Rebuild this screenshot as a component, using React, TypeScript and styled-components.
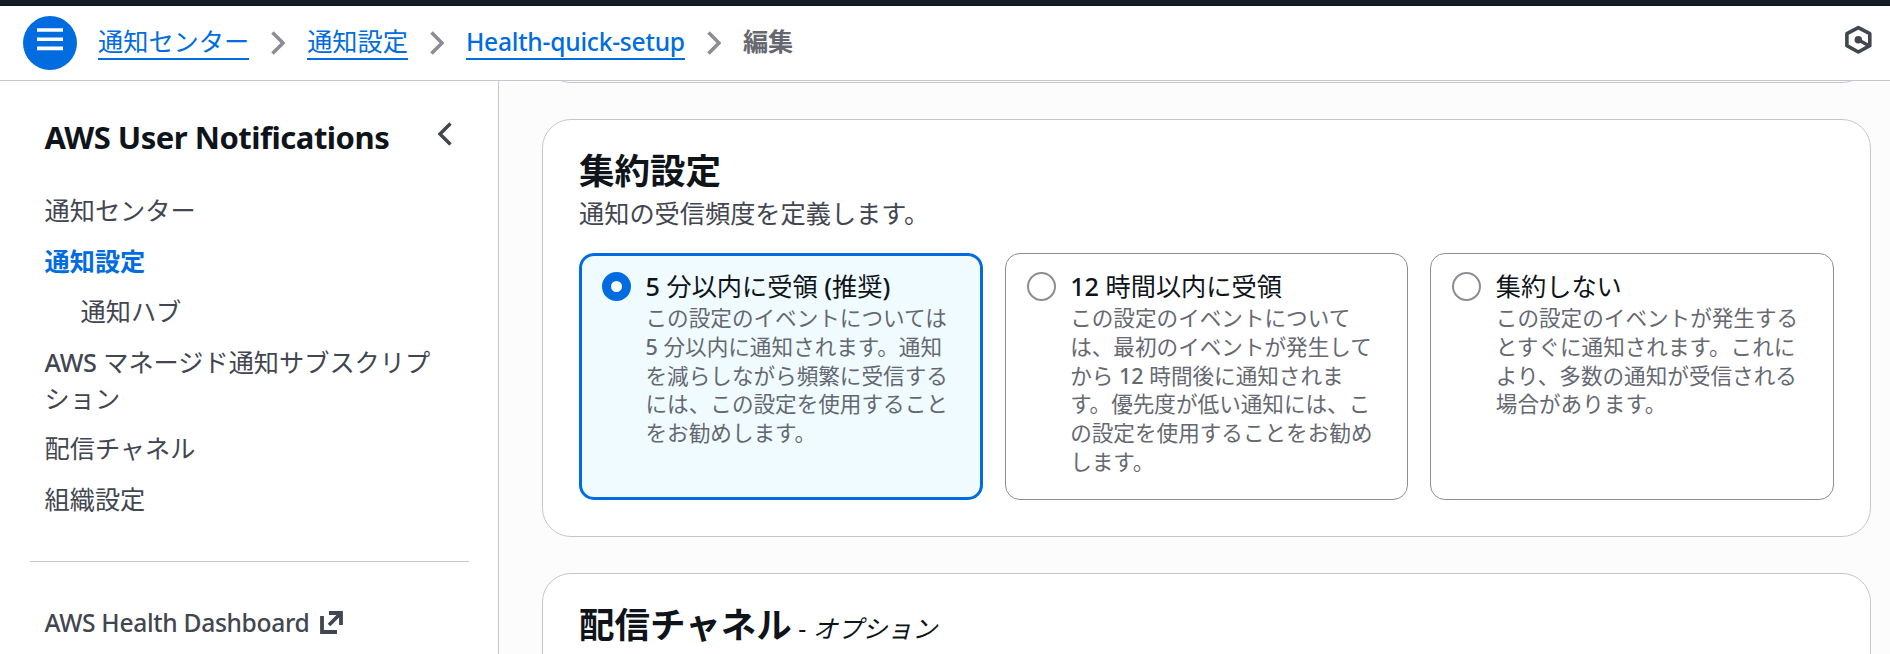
import React from "react";
import styled, { createGlobalStyle, css } from "styled-components";

const GlobalStyle = createGlobalStyle`
  *, *::before, *::after { box-sizing: border-box; }
  html, body { margin: 0; padding: 0; height: 100%; overflow: hidden; }
  body {
    font-family: "Noto Sans", "Noto Sans CJK JP", sans-serif;
    font-size: 25.2px;
    line-height: 36px;
    color: #0f141a;
    background: #fff;
  }
`;

const Page = styled.div`
  height: 654px;
  display: flex;
  flex-direction: column;
`;

const TopStrip = styled.div`
  flex: none;
  height: 6px;
  background: #161d26;
  border-bottom: 1px solid #14111f;
`;

const Header = styled.header`
  flex: none;
  height: 75px;
  display: flex;
  align-items: center;
  padding: 0 18px 0 23px;
  background: #fff;
  border-bottom: 1px solid #c6c6cd;
`;

const MenuButton = styled.button`
  flex: none;
  width: 54px;
  height: 54px;
  margin: 0 21px 0 0;
  padding: 12px 0 0;
  border: 0;
  border-radius: 50%;
  background: #006ce0;
  display: flex;
  justify-content: center;
  align-items: flex-start;
`;

const Breadcrumbs = styled.nav`
  flex: 1;
  display: flex;
  align-items: center;
  white-space: nowrap;
`;

const Crumb = styled.a`
  height: 34px;
  line-height: 30px;
  color: #006ce0;
  border-bottom: 2px solid #006ce0;
`;

const Current = styled.span`
  height: 34px;
  line-height: 30px;
  color: #656871;
  font-weight: 700;
`;

const Separator = styled.svg`
  flex: none;
  width: 14px;
  height: 24px;
  margin: 0 22px;
`;

const AssistantIcon = styled.svg`
  flex: none;
  width: 28px;
  height: 30px;
  margin-bottom: 7px;
`;

const Latin = styled.span<{ $size?: number; $track?: number }>`
  ${(p) => p.$size && css`font-size: ${p.$size}px;`}
  font-weight: 500;
  letter-spacing: ${(p) => p.$track ?? 0}px;
`;

const Body = styled.div`
  flex: 1;
  min-height: 0;
  display: flex;
`;

const Sidebar = styled.aside`
  flex: none;
  width: 499px;
  padding: 37px 29px 0 30px;
  border-right: 1px solid #c6c6cd;
  background: #fff;
  white-space: nowrap;
`;

const SidebarHeader = styled.div`
  display: flex;
  justify-content: space-between;
  align-items: flex-start;
  height: 74px;
  padding: 0 17.5px 0 14.500px;
`;

const SidebarTitle = styled.h2`
  margin: 0;
  font-size: 31px;
  line-height: 38px;
  font-weight: 700;
  letter-spacing: -0.5px;
`;

const CollapseIcon = styled.svg`
  flex: none;
  width: 14px;
  height: 24px;
  margin-top: 4px;
`;

const NavList = styled.ul`
  list-style: none;
  margin: 0;
  padding: 0 0 0 14.5px;
  display: flex;
  flex-direction: column;
  gap: 14.6px;
  color: #424650;
`;

const NavItem = styled.li<{ $active?: boolean; $nested?: boolean }>`
  padding-left: ${(p) => (p.$nested ? 36 : 0)}px;
  ${(p) =>
    p.$active &&
    css`
      color: #006ce0;
      font-weight: 700;
    `}
`;

const Divider = styled.hr`
  margin: 44px 0 43px;
  border: 0;
  height: 1px;
  background: #c6c6cd;
`;

const ExternalLink = styled.a`
  display: flex;
  align-items: center;
  gap: 11px;
  padding-left: 14.5px;
  color: #424650;
`;

const Main = styled.main`
  flex: 1;
  min-width: 0;
  padding: 0 19px 0 43px;
  background: #fcfcfd;
  display: flex;
  flex-direction: column;
  gap: 36px;
  overflow: hidden;
`;

const Panel = styled.section`
  flex: none;
  padding: 29px 36px 36px;
  border: 1px solid #c6c6cd;
  border-radius: 29px;
  background: #fff;
`;

const PreviousPanel = styled(Panel)`
  height: 80px;
  margin-top: -78px;
`;

const PanelTitle = styled.h2`
  margin: 0;
  font-size: 35.5px;
  line-height: 43px;
  font-weight: 700;
  white-space: nowrap;
`;

const Optional = styled.span`
  font-size: 24.9px;
  font-weight: 400;
`;

const PanelDescription = styled.p`
  margin: 3px 0 22px;
  color: #424650;
`;

const Options = styled.div`
  display: grid;
  grid-template-columns: repeat(3, 1fr);
  gap: 22px;
`;

const Option = styled.label<{ $selected?: boolean }>`
  height: 247px;
  display: flex;
  gap: 14.5px;
  padding: 17px 20px;
  border: 1px solid #8c8c94;
  border-radius: 15px;
  ${(p) =>
    p.$selected &&
    css`
      padding: 15px 19px;
      border: 3px solid #006ce0;
      background: #f0fbff;
    `}
`;

const Radio = styled.span<{ $selected?: boolean }>`
  flex: none;
  width: 29px;
  height: 29px;
  margin: 1px 0 0 1px;
  border-radius: 50%;
  border: ${(p) => (p.$selected ? "9px solid #006ce0" : "2px solid #8c8c94")};
  background: #fff;
`;

const OptionText = styled.div`
  white-space: nowrap;
`;

const OptionTitle = styled.div`
  height: 33px;
  line-height: 30px;
`;

const OptionLine = styled.div`
  height: 28.8px;
  font-size: 21.6px;
  line-height: 28.8px;
  color: #656871;
`;

const Chevron = () => (
  <Separator viewBox="0 0 14 24" fill="none">
    <path d="M1.5 1.5 12 12 1.5 22.5" stroke="#8c8c94" strokeWidth="3.6" />
  </Separator>
);

/* Latin letters and digits are set a little heavier than the Japanese around them. */
const Mixed = ({ text }: { text: string }) => (
  <>
    {text
      .split(/([A-Za-z0-9()]+)/)
      .map((part, i) => (i % 2 ? <Latin key={i}>{part}</Latin> : part))}
  </>
);

const options = [
  {
    title: "5 分以内に受領 (推奨)",
    selected: true,
    lines: [
      "この設定のイベントについては",
      "5 分以内に通知されます。通知",
      "を減らしながら頻繁に受信する",
      "には、この設定を使用すること",
      "をお勧めします。",
    ],
  },
  {
    title: "12 時間以内に受領",
    selected: false,
    lines: [
      "この設定のイベントについて",
      "は、最初のイベントが発生して",
      "から 12 時間後に通知されま",
      "す。優先度が低い通知には、こ",
      "の設定を使用することをお勧め",
      "します。",
    ],
  },
  {
    title: "集約しない",
    selected: false,
    lines: [
      "この設定のイベントが発生する",
      "とすぐに通知されます。これに",
      "より、多数の通知が受信される",
      "場合があります。",
    ],
  },
];

export default function App() {
  return (
    <>
      <GlobalStyle />
      <Page>
        <TopStrip />
        <Header>
          <MenuButton aria-label="メニュー">
            <svg width="26" height="23" viewBox="0 0 26 23">
              <path d="M0 2h26M0 11.2h26M0 20.4h26" stroke="#fff" strokeWidth="3.6" />
            </svg>
          </MenuButton>
          <Breadcrumbs>
            <Crumb>通知センター</Crumb>
            <Chevron />
            <Crumb>通知設定</Crumb>
            <Chevron />
            <Crumb>
              <Latin $size={24.6} $track={-0.23}>Health-quick-setup</Latin>
            </Crumb>
            <Chevron />
            <Current>編集</Current>
          </Breadcrumbs>
          <AssistantIcon viewBox="0 0 28 30" fill="none">
            <path
              d="M14.3 2.6 25.8 8.700V20.700L14.3 27 2.900 20.700V8.700Z"
              stroke="#424650"
              strokeWidth="3.6"
              strokeLinejoin="round"
            />
            <path d="M14.3 14.8 24.500 20.400" stroke="#424650" strokeWidth="3.4" />
            <circle cx="14.3" cy="14.8" r="3.8" fill="#424650" />
          </AssistantIcon>
        </Header>
        <Body>
          <Sidebar>
            <SidebarHeader>
              <SidebarTitle>AWS User Notifications</SidebarTitle>
              <CollapseIcon viewBox="0 0 14 24" fill="none">
                <path d="M12.5 1.5 2 12l10.500 10.500" stroke="#424650" strokeWidth="3.4" />
              </CollapseIcon>
            </SidebarHeader>
            <NavList>
              <NavItem>通知センター</NavItem>
              <NavItem $active>通知設定</NavItem>
              <NavItem $nested>通知ハブ</NavItem>
              <NavItem>
                <Latin $track={-0.3}>AWS</Latin> マネージド通知サブスクリプ
                <br />
                ション
              </NavItem>
              <NavItem>配信チャネル</NavItem>
              <NavItem>組織設定</NavItem>
            </NavList>
            <Divider />
            <ExternalLink>
              <Latin $size={24.6} $track={-0.33}>AWS Health Dashboard</Latin>
              <svg width="23" height="23" viewBox="0 0 23 23" fill="none" stroke="#424650" strokeWidth="3.8">
                <path d="M9 2h12v12M20.500 2.500 9 14M2 5v16h15" />
              </svg>
            </ExternalLink>
          </Sidebar>
          <Main>
            <PreviousPanel />
            <Panel>
              <PanelTitle>集約設定</PanelTitle>
              <PanelDescription>通知の受信頻度を定義します。</PanelDescription>
              <Options>
                {options.map((o) => (
                  <Option key={o.title} $selected={o.selected}>
                    <Radio $selected={o.selected} />
                    <OptionText>
                      <OptionTitle>
                        <Mixed text={o.title} />
                      </OptionTitle>
                      {o.lines.map((l) => (
                        <OptionLine key={l}>
                          <Mixed text={l} />
                        </OptionLine>
                      ))}
                    </OptionText>
                  </Option>
                ))}
              </Options>
            </Panel>
            <Panel>
              <PanelTitle>
                配信チャネル
                <Optional>
                  {" "}- <i>オプション</i>
                </Optional>
              </PanelTitle>
            </Panel>
          </Main>
        </Body>
      </Page>
    </>
  );
}
